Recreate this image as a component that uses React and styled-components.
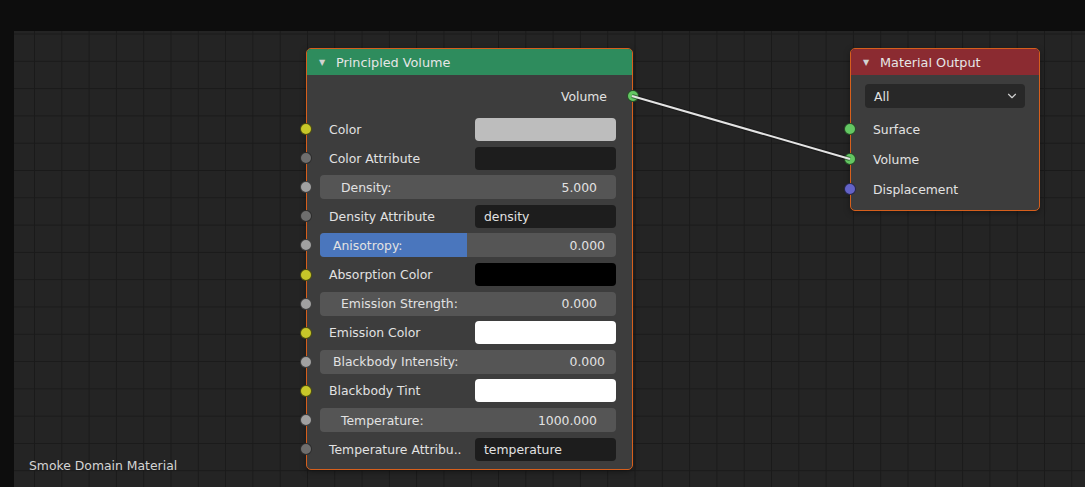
import React from 'react';
import styled, { createGlobalStyle } from 'styled-components';
import { ChevronDown } from 'lucide-react';

const GlobalStyle = createGlobalStyle`
  html, body {
    margin: 0;
    padding: 0;
    background: #0d0d0d;
  }
  body {
    font-family: 'DejaVu Sans', 'Liberation Sans', sans-serif;
    overflow: hidden;
  }
`;

const SOCKET = {
  color: '#c7c729',
  float: '#a1a1a1',
  string: '#6e6e6e',
  shader: '#63c763',
  vector: '#6363c7',
};

const Screen = styled.div`
  width: 1085px;
  height: 487px;
  display: flex;
  flex-direction: column;
`;

const TopBar = styled.div`
  height: 31px;
  flex-shrink: 0;
  background: #0d0d0d;
`;

const Body = styled.div`
  flex: 1;
  display: flex;
`;

const SideStrip = styled.div`
  width: 14px;
  flex-shrink: 0;
  background: #0d0d0d;
`;

const Canvas = styled.div`
  position: relative;
  flex: 1;
  overflow: hidden;
  background-color: #242424;
  background-image:
    linear-gradient(to right, #1a1a1a 1px, transparent 1px),
    linear-gradient(to bottom, #1a1a1a 1px, transparent 1px);
  background-size: 27.3px 27.3px;
  background-position: 20px 2.5px;
`;

const Links = styled.svg`
  position: absolute;
  inset: 0;
  width: 100%;
  height: 100%;
  pointer-events: none;
  z-index: 2;
`;

const CanvasLabel = styled.div`
  position: absolute;
  left: 15px;
  bottom: 14px;
  font-size: 12.4px;
  color: #d4d4d4;
`;

const Node = styled.div`
  position: absolute;
  left: ${(p) => p.$x}px;
  top: ${(p) => p.$y}px;
  width: ${(p) => p.$w}px;
  box-sizing: border-box;
  background: #3d3d3d;
  border: 1px solid #d65f1c;
  border-radius: 5px;
  box-shadow: 0 2px 6px rgba(0, 0, 0, 0.35);
  padding-bottom: ${(p) => p.$bottom || 8}px;
  z-index: 1;
`;

const Header = styled.div`
  height: 26px;
  display: flex;
  align-items: center;
  gap: 8px;
  padding-left: 12px;
  background: ${(p) => p.$color};
  border-radius: 4px 4px 0 0;
  font-size: 12.8px;
  color: #e6e6e6;
`;

const Arrow = styled.span`
  font-size: 8px;
  color: #d2d2d2;
  width: 9px;
`;

const Rows = styled.div`
  display: flex;
  flex-direction: column;
  gap: ${(p) => p.$gap}px;
  padding-top: 9px;
`;

const Row = styled.div`
  position: relative;
  height: 24px;
  display: flex;
  align-items: center;
  margin-bottom: ${(p) => (p.$extra ? p.$extra : 0)}px;
`;

const Socket = styled.span`
  position: absolute;
  top: 6px;
  ${(p) => (p.$side === 'right' ? 'right: -7px;' : 'left: -7px;')}
  width: 10px;
  height: 10px;
  border-radius: 50%;
  background: ${(p) => p.$color};
  border: 1px solid rgba(0, 0, 0, 0.6);
`;

const Label = styled.span`
  font-size: 12.4px;
  color: #e2e2e2;
  white-space: nowrap;
`;

const OutputLabel = styled(Label)`
  margin-left: auto;
  margin-right: 25px;
`;

const InputLabel = styled(Label)`
  padding-left: ${(p) => p.$pad}px;
  width: ${(p) => p.$w}px;
  flex-shrink: 0;
  overflow: hidden;
`;

const Field = styled.div`
  width: 141px;
  height: 23px;
  box-sizing: border-box;
  border-radius: 4px;
  background: ${(p) => p.$bg || '#1d1d1d'};
  padding-left: 9px;
  display: flex;
  align-items: center;
  font-size: 12.4px;
  color: #e2e2e2;
`;

const Slider = styled.div`
  position: relative;
  margin-left: 13px;
  width: 296px;
  height: 24px;
  border-radius: 4px;
  background: #555555;
  overflow: hidden;
  display: flex;
  align-items: center;
  justify-content: space-between;
  padding: 0 ${(p) => (p.$factor ? 11 : 19)}px 0 ${(p) => (p.$factor ? 13 : 21)}px;
  box-sizing: border-box;
  font-size: 12.4px;
  color: #e2e2e2;
`;

const Fill = styled.div`
  position: absolute;
  left: 0;
  top: 0;
  bottom: 0;
  background: #4a76bd;
`;

const SliderText = styled.span`
  position: relative;
  white-space: nowrap;
`;

const Dropdown = styled.div`
  margin: 0 14px 0 14px;
  flex: 1;
  height: 24px;
  border-radius: 4px;
  background: #282828;
  display: flex;
  align-items: center;
  justify-content: space-between;
  padding: 0 6px 0 9px;
  font-size: 12.4px;
  color: #e2e2e2;
`;

const principled = [
  { kind: 'color', label: 'Color', socket: 'color', value: '#bdbdbd' },
  { kind: 'text', label: 'Color Attribute', socket: 'string', value: '' },
  { kind: 'number', label: 'Density:', socket: 'float', value: '5.000' },
  { kind: 'text', label: 'Density Attribute', socket: 'string', value: 'density' },
  { kind: 'factor', label: 'Anisotropy:', socket: 'float', value: '0.000', fill: 0.495 },
  { kind: 'color', label: 'Absorption Color', socket: 'color', value: '#000000' },
  { kind: 'number', label: 'Emission Strength:', socket: 'float', value: '0.000' },
  { kind: 'color', label: 'Emission Color', socket: 'color', value: '#ffffff' },
  { kind: 'factor', label: 'Blackbody Intensity:', socket: 'float', value: '0.000', fill: 0 },
  { kind: 'color', label: 'Blackbody Tint', socket: 'color', value: '#ffffff' },
  { kind: 'number', label: 'Temperature:', socket: 'float', value: '1000.000' },
  { kind: 'text', label: 'Temperature Attribu..', socket: 'string', value: 'temperature' },
];

const outputs = [
  { label: 'Surface', socket: 'shader' },
  { label: 'Volume', socket: 'shader' },
  { label: 'Displacement', socket: 'vector' },
];

const InputRow = ({ item }) => {
  const socket = <Socket $color={SOCKET[item.socket]} />;
  if (item.kind === 'number' || item.kind === 'factor') {
    const factor = item.kind === 'factor';
    return (
      <Row>
        {socket}
        <Slider $factor={factor}>
          {factor && <Fill style={{ width: `${item.fill * 100}%` }} />}
          <SliderText>{item.label}</SliderText>
          <SliderText>{item.value}</SliderText>
        </Slider>
      </Row>
    );
  }
  return (
    <Row>
      {socket}
      <InputLabel $pad={22} $w={146}>
        {item.label}
      </InputLabel>
      {item.kind === 'color' ? (
        <Field $bg={item.value} />
      ) : (
        <Field>{item.value}</Field>
      )}
    </Row>
  );
};

export default function App() {
  return (
    <>
      <GlobalStyle />
      <Screen>
        <TopBar />
        <Body>
          <SideStrip />
          <Canvas>
            <Links>
              <line
                x1="618"
                y1="65"
                x2="836"
                y2="128"
                stroke="#111"
                strokeOpacity="0.5"
                strokeWidth="4"
              />
              <line
                x1="618"
                y1="65"
                x2="836"
                y2="128"
                stroke="#e4e4e4"
                strokeWidth="2"
              />
            </Links>

            <Node $x={292} $y={17} $w={327} $bottom={8}>
              <Header $color="#2e8c5d">
                <Arrow>▼</Arrow>
                Principled Volume
              </Header>
              <Rows $gap={5.1}>
                <Row $extra={4}>
                  <OutputLabel>Volume</OutputLabel>
                  <Socket $side="right" $color={SOCKET.shader} />
                </Row>
                {principled.map((item) => (
                  <InputRow key={item.label} item={item} />
                ))}
              </Rows>
            </Node>

            <Node $x={836} $y={17} $w={190} $bottom={9}>
              <Header $color="#8b2b31">
                <Arrow>▼</Arrow>
                Material Output
              </Header>
              <Rows $gap={6}>
                <Row $extra={3}>
                  <Dropdown>
                    All
                    <ChevronDown size={14} color="#cfcfcf" strokeWidth={2} />
                  </Dropdown>
                </Row>
                {outputs.map((o) => (
                  <Row key={o.label}>
                    <Socket $color={SOCKET[o.socket]} />
                    <InputLabel $pad={22} $w={160}>
                      {o.label}
                    </InputLabel>
                  </Row>
                ))}
              </Rows>
            </Node>

            <CanvasLabel>Smoke Domain Material</CanvasLabel>
          </Canvas>
        </Body>
      </Screen>
    </>
  );
}
